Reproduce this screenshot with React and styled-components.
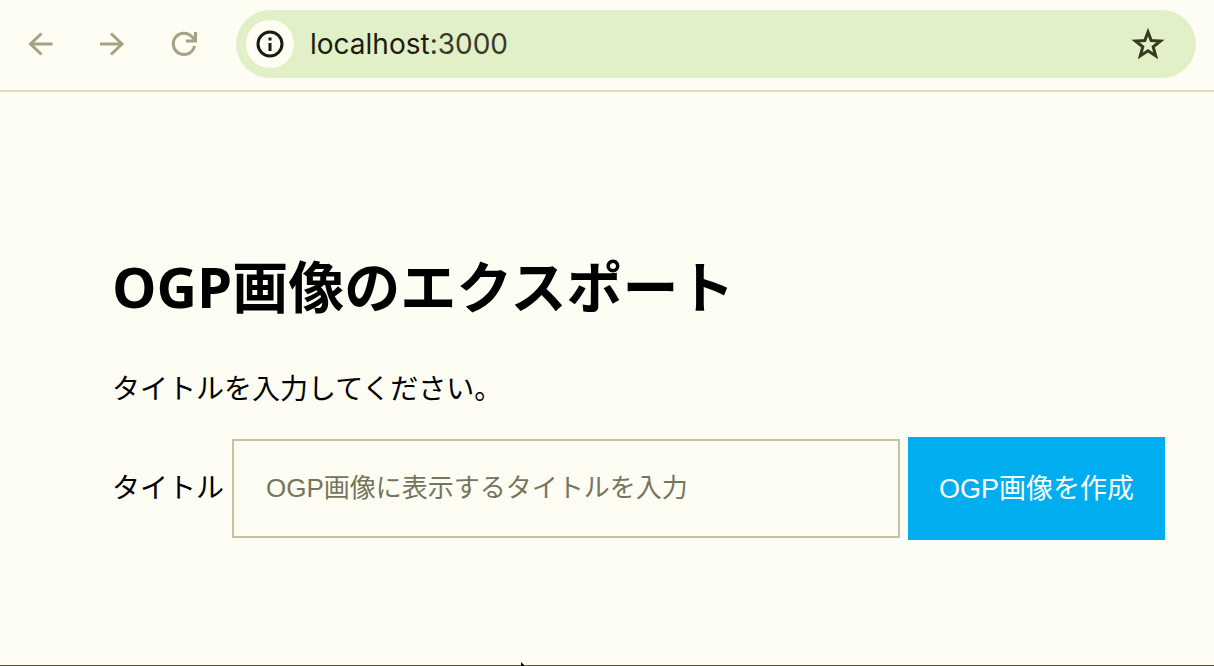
import React from "react";
import styled, { createGlobalStyle } from "styled-components";

const sans = '"Liberation Sans", "Noto Sans CJK JP", sans-serif';

const GlobalStyle = createGlobalStyle`
  *, *::before, *::after { box-sizing: border-box; }
  body {
    margin: 0;
    background: #fdfdf4;
    color: #000;
    font-family: ${sans};
  }
`;

const Window = styled.div`
  position: relative;
  display: flex;
  flex-direction: column;
  min-height: 100vh;
  border-bottom: 1px solid #55553c;
`;

const Toolbar = styled.header`
  display: flex;
  align-items: center;
  padding: 10px 18px 12px 20px;
  border-bottom: 2px solid #dedeb8;
`;

const NavButtons = styled.nav`
  display: flex;
  gap: 32px;
  margin-right: 32px;
`;

const IconButton = styled.button`
  display: flex;
  flex: none;
  align-items: center;
  justify-content: center;
  width: ${(p) => p.$size}px;
  height: ${(p) => p.$size}px;
  padding: 0;
  border: 0;
  border-radius: 50%;
  background: ${(p) => p.$fill || "transparent"};
  color: ${(p) => p.$color};
`;

const AddressBar = styled.div`
  display: flex;
  flex: 1;
  align-items: center;
  gap: 16px;
  height: 68px;
  padding: 0 28px 0 10px;
  border-radius: 34px;
  background: #e2f0c8;
`;

const Address = styled.div`
  flex: 1;
  font-family: Inter, sans-serif;
  font-size: 28px;
  line-height: 36px;
  color: #1c1c14;
`;

const Port = styled.span`
  color: #3a3a2c;
`;

const Page = styled.main`
  padding: 154px 49px 32px 112px;
`;

const Heading = styled.h1`
  margin: 0 0 44px;
  font-family: "Open Sans", "Noto Sans CJK JP", sans-serif;
  font-size: 56px;
  line-height: 80px;
  font-weight: 700;
`;

const Lead = styled.p`
  margin: 0 0 27px;
  font-size: 28px;
  line-height: 40px;
`;

const Form = styled.form`
  display: flex;
  align-items: center;
  gap: 8px;
`;

const Label = styled.label`
  font-size: 28px;
  line-height: 40px;
  white-space: nowrap;
`;

const TextInput = styled.input`
  flex: 1;
  min-width: 0;
  height: 99px;
  padding: 0 32px;
  border: 2px solid #c4c4a4;
  border-radius: 0;
  background: transparent;
  font-family: ${sans};
  font-size: 26px;
  color: #000;
  &::placeholder { color: #75755c; opacity: 1; }
`;

const SubmitButton = styled.button`
  flex: none;
  height: 103px;
  padding: 0 31px;
  border: 0;
  background: #00adef;
  color: #fff;
  font-family: ${sans};
  font-size: 27px;
  line-height: 40px;
  white-space: nowrap;
`;

const Pointer = styled.svg`
  position: absolute;
  left: 520px;
  bottom: -1px;
`;

function Icon({ size, children }) {
  return (
    <svg width={size} height={size} viewBox={`0 0 ${size} ${size}`} fill="none" stroke="currentColor" strokeWidth="3" aria-hidden="true">
      {children}
    </svg>
  );
}

export default function App() {
  return (
    <Window>
      <GlobalStyle />
      <Toolbar>
        <NavButtons aria-label="Navigation">
          <IconButton type="button" $size={40} $color="#a3a382" aria-label="Back">
            <Icon size={32}><path d="M28.500 16H6.500M17.500 5.500L6.500 16l11 10.500" /></Icon>
          </IconButton>
          <IconButton type="button" $size={40} $color="#a3a382" aria-label="Forward">
            <Icon size={32}><path d="M4 16h22M15 5.500L26 16 15 26.500" /></Icon>
          </IconButton>
          <IconButton type="button" $size={40} $color="#a3a382" aria-label="Reload">
            <Icon size={32}><path d="M26.500 18A10.700 10.700 0 1 1 23.800 8.500L27 12M27.500 4v9H18" /></Icon>
          </IconButton>
        </NavButtons>
        <AddressBar>
          <IconButton type="button" $size={48} $fill="#fdfdf4" $color="#1a1a0e" aria-label="Site information">
            <Icon size={28}>
              <circle cx="14" cy="14" r="12" />
              <path d="M14 13v8M14 7.500v3" />
            </Icon>
          </IconButton>
          <Address>localhost<Port>:3000</Port></Address>
          <IconButton type="button" $size={40} $color="#383820" aria-label="Bookmark">
            <Icon size={40}>
              <path d="M20 8l3.200 8.600 9.300.4-7.300 5.800 2.500 9.100L20 26.800l-7.700 5.100 2.500-9.100L7.500 17l9.300-.4z" />
            </Icon>
          </IconButton>
        </AddressBar>
      </Toolbar>
      <Page>
        <Heading>OGP画像のエクスポート</Heading>
        <Lead>タイトルを入力してください。</Lead>
        <Form onSubmit={(e) => e.preventDefault()}>
          <Label htmlFor="title">タイトル</Label>
          <TextInput id="title" type="text" placeholder="OGP画像に表示するタイトルを入力" />
          <SubmitButton type="submit">OGP画像を作成</SubmitButton>
        </Form>
      </Page>
      <Pointer width="5" height="4" viewBox="0 0 5 4" aria-hidden="true">
        <path d="M1 0l3 3v1H1z" fill="#000" />
      </Pointer>
    </Window>
  );
}
